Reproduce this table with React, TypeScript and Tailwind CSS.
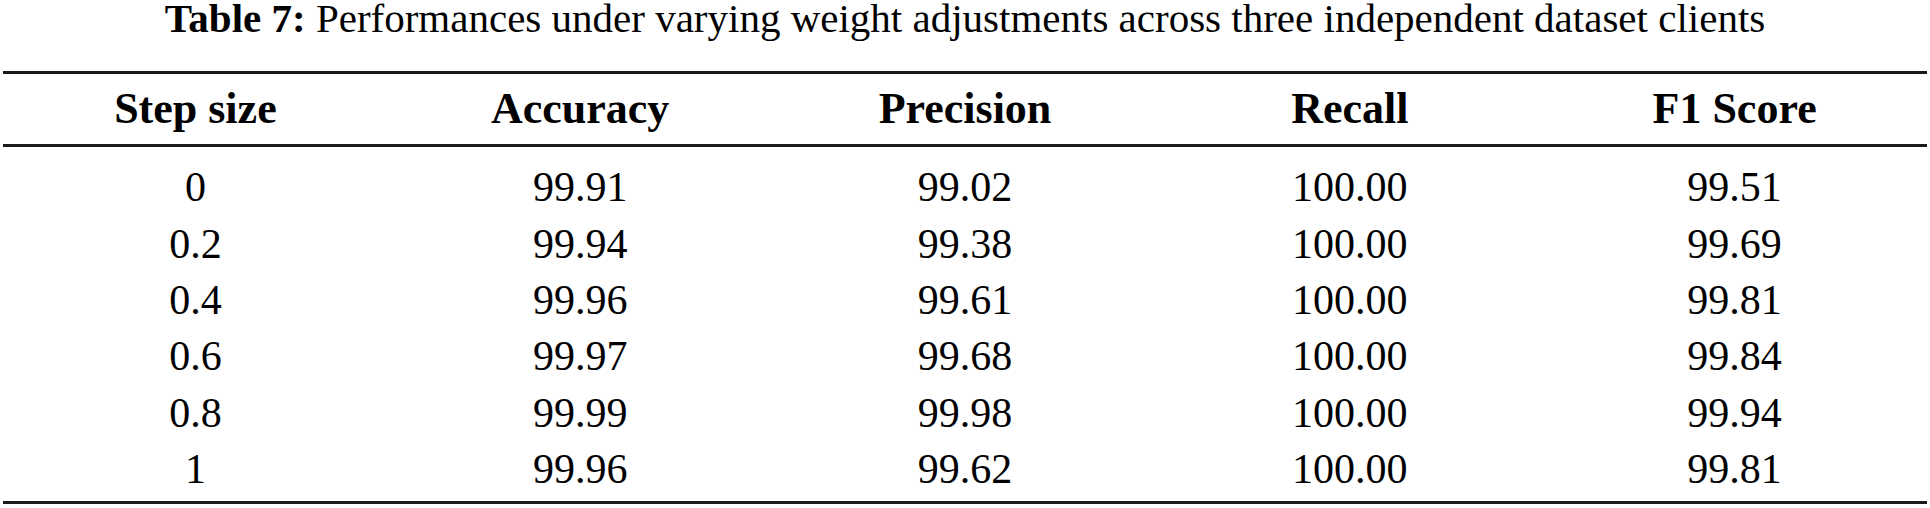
import React from "react";

const headers = ["Step size", "Accuracy", "Precision", "Recall", "F1 Score"];
const rows = [
  ["0", "99.91", "99.02", "100.00", "99.51"],
  ["0.2", "99.94", "99.38", "100.00", "99.69"],
  ["0.4", "99.96", "99.61", "100.00", "99.81"],
  ["0.6", "99.97", "99.68", "100.00", "99.84"],
  ["0.8", "99.99", "99.98", "100.00", "99.94"],
  ["1", "99.96", "99.62", "100.00", "99.81"],
];

export default function App() {
  return (
    <div className="w-[1930px] h-[508px] bg-white text-black overflow-hidden font-['Liberation_Serif','DejaVu_Serif',serif]">
      <div className="h-[37px] text-center text-[41px] leading-[37px] whitespace-nowrap">
        <span className="font-bold">Table 7:</span> Performances under varying weight adjustments across three independent dataset clients
      </div>
      <div className="mt-[34px] mx-[3px]">
        <div className="border-t-[3px] border-b-[3px] border-[#1a1a1a] grid grid-cols-5 h-[76px] items-center">
          {headers.map((h) => (
            <div key={h} className="text-center font-bold text-[44px] leading-[44px]">
              {h}
            </div>
          ))}
        </div>
        <div className="pt-[12px] pb-[4px] border-b-[3px] border-[#1a1a1a]">
          {rows.map((r, i) => (
            <div key={i} className="grid grid-cols-5 h-[56.4px] items-center">
              {r.map((c, j) => (
                <div key={j} className="text-center text-[42px] leading-[42px]">
                  {c}
                </div>
              ))}
            </div>
          ))}
        </div>
      </div>
    </div>
  );
}
